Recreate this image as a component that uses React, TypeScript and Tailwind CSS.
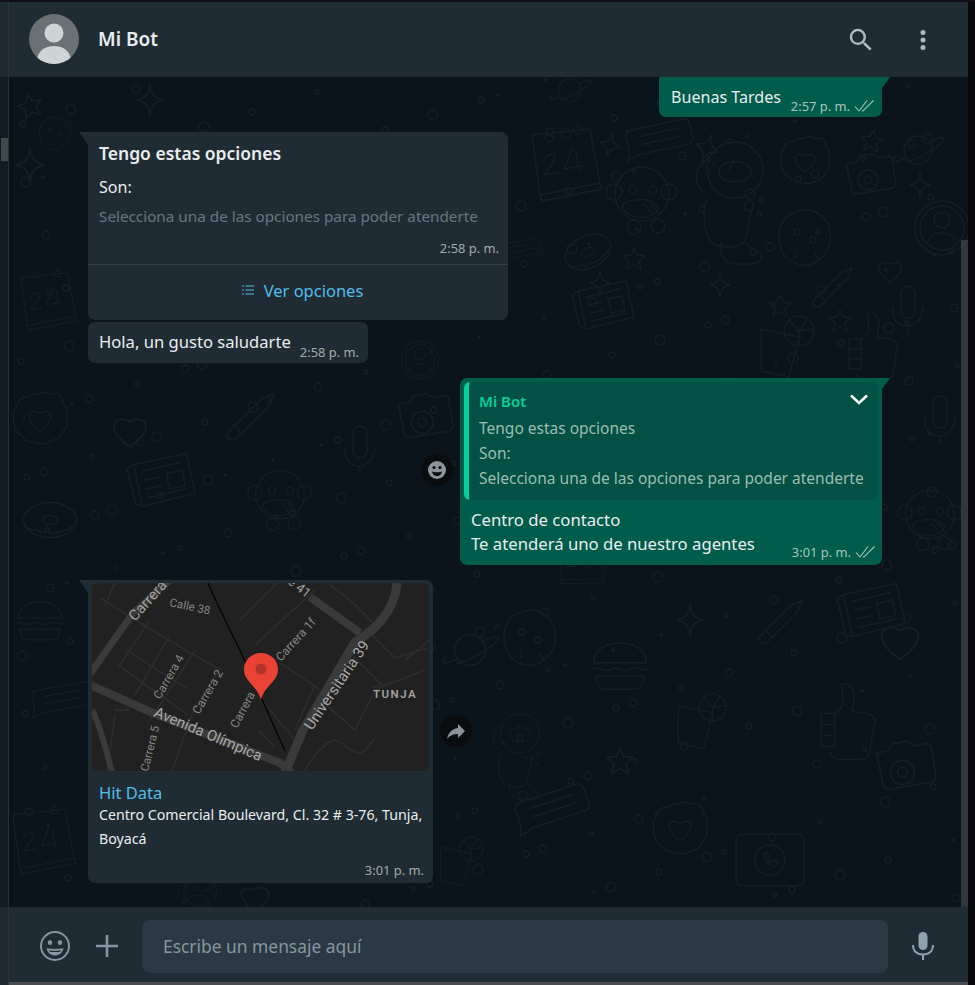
import type { ReactNode } from "react";

const font = "font-['Noto_Sans','Liberation_Sans',sans-serif]";

const Checks = () => (
  <svg width="21" height="14" viewBox="0 0 21 14" fill="none" stroke="#9fc9bd" strokeWidth="1.1" className="shrink-0">
    <path d="M1 7.5l4 4.5L13 1.5" />
    <path d="M8 11.5l.8.6L19.5 1.5" />
  </svg>
);

const Tail = ({ side, color }: { side: "left" | "right"; color: string }) => (
  <svg
    width="10"
    height="14"
    viewBox="0 0 10 14"
    className={side === "left" ? "absolute top-0 left-[-9px]" : "absolute top-0 right-[-8px]"}
  >
    {side === "left" ? <path d="M0 0h10v14z" fill={color} /> : <path d="M10 0H0v14z" fill={color} />}
  </svg>
);

const Star = ({ x, y, s = 1, r = 0 }: { x: number; y: number; s?: number; r?: number }) => (
  <path transform={`translate(${x} ${y}) rotate(${r}) scale(${s})`} d="M0-10l3 7 8 1-6 5 2 8-7-4-7 4 2-8-6-5 8-1z" />
);

const Spark = ({ x, y, s = 1, r = 0 }: { x: number; y: number; s?: number; r?: number }) => (
  <path transform={`translate(${x} ${y}) rotate(${r}) scale(${s})`} d="M0-12C1-4 3-2 10 0 3 2 1 4 0 12-1 4-3 2-10 0-3-2-1-4 0-12z" />
);

const G = ({ x, y, s = 1, r = 0, children }: { x: number; y: number; s?: number; r?: number; children: ReactNode }) => (
  <g transform={`translate(${x} ${y}) rotate(${r}) scale(${s})`}>{children}</g>
);

type P = { x: number; y: number; s?: number; r?: number };

const Calendar = (p: P) => (
  <G {...p}>
    <path d="M-30-28L28-34 38 20-22 32z" />
    <path d="M-22 32l2 6 60-12-2-6" />
    <circle cx="-12" cy="-31" r="4" />
    <circle cx="16" cy="-33" r="4" />
    <path d="M-18-2c2-10 14-8 10 0l-10 14 14-2M10-14L2 6l18-3M14-12l3 20" />
  </G>
);

const Note = (p: P) => (
  <G {...p}>
    <path d="M-30-10L28-20c3 0 4 1 5 4l3 16c0 3-1 4-4 5l-50 9-12 6 2-10-3-14c0-3 1-5 4-6z" />
    <path d="M-18-4L22-11M-16 4L24-3" />
  </G>
);

const Monkey = (p: P) => (
  <G {...p}>
    <circle cx="0" cy="-6" r="27" />
    <circle cx="-28" cy="-8" r="8" />
    <circle cx="27" cy="-8" r="8" />
    <circle cx="-9" cy="-10" r="4" />
    <circle cx="11" cy="-10" r="4" />
    <path d="M-20 6c6-8 30-10 36 2-4 12-30 14-36-2zM2 4l8 10M8 3l8 10" />
    <circle cx="-8" cy="27" r="7" />
    <circle cx="16" cy="26" r="7" />
  </G>
);

const Astronaut = (p: P) => (
  <G {...p}>
    <circle cx="0" cy="-38" r="28" />
    <path d="M-16-36c0-14 32-14 32 0 0 12-32 14-32 0zM-6-38l5-10" />
    <path d="M-28-48c-12 4-14 24-4 32" />
    <path d="M-28-8c-6 14-2 32 4 42 6 6 30 8 34-2l8-36" />
    <path d="M-14 34c-4 14 6 22 16 22s26 2 24-8c-2-8-14-8-16-14" />
    <circle cx="14" cy="-2" r="5" />
    <circle cx="26" cy="-8" r="2" />
    <circle cx="24" cy="6" r="2" />
  </G>
);

const Cookie = (p: P) => (
  <G {...p}>
    <path d="M-24-14c4-12 14-14 24-16 12 0 22 8 24 18 4 12 0 24-10 32-8 8-22 6-30 0-10-8-12-24-8-34z" />
    <circle cx="-8" cy="-8" r="3" />
    <circle cx="8" cy="0" r="3" />
    <path d="M-10 10c2 4 2 6 0 8M10 14l4 6" />
  </G>
);

const Flower = (p: P) => (
  <G {...p}>
    <path d="M0-24c6-4 10 2 14 0 6 0 6 6 8 10 4 4 2 8 2 14 2 6-2 8-4 12-2 6-8 6-12 8-6 4-10 0-16 0-6 0-8-6-12-8-4-4-4-10-4-14-2-6 2-8 4-14 2-6 8-4 12-6 2-2 4-2 8-2z" />
    <path d="M0 10C-16-2-10-12 0-6 10-12 16-2 0 10z" />
  </G>
);

const Camera = (p: P) => (
  <G {...p}>
    <path d="M-20-14l10-2 4-6 12-2 6 4 10-2c3 0 4 1 4 3l4 24c0 3-1 4-3 5l-36 6c-3 0-4-1-5-3l-5-24c0-2 0-3-1-3z" />
    <circle cx="2" cy="2" r="10" />
    <circle cx="2" cy="2" r="4" />
  </G>
);

const Saturn = (p: P) => (
  <G {...p}>
    <circle cx="0" cy="0" r="14" />
    <path d="M-12 8C-24 14-28 12-22 6M12-8C24-14 30-14 22-6 14 2-2 10-12 12" />
  </G>
);

const Profile = (p: P) => (
  <G {...p}>
    <circle r="27" />
    <circle r="22" />
    <circle cy="-8" r="8" />
    <path d="M-14 14c2-12 26-12 28 0" />
  </G>
);

const Donut = (p: P) => (
  <G {...p}>
    <ellipse rx="24" ry="16" />
    <ellipse rx="7" ry="4" />
    <path d="M-22 6c8 6 10 0 14 6 6-4 10 2 14 0 6-4 8 0 14-6" />
  </G>
);

const Paper = (p: P) => (
  <G {...p}>
    <path d="M-24-14L24-24l8 36-48 12z" />
    <path d="M-24-14l-6 4 8 32 6 2" />
    <path d="M-16-8L18-16M-14 0L0-3M-12 8L2 5M-10 16L24 8" />
    <path d="M6-6L20-9l3 14-14 3z" />
  </G>
);

const Pencil = (p: P) => (
  <G {...p}>
    <path d="M-18 10L10-18l10-4-4 10-28 28c-4 2-10-2-6-6z" />
    <path d="M-14 4l8 8" />
  </G>
);

const Mic = (p: P) => (
  <G {...p}>
    <rect x="-7" y="-24" width="14" height="32" rx="7" />
    <path d="M-15-2c-2 24 28 24 30 0M0 16v8" />
  </G>
);

const Thumb = (p: P) => (
  <G {...p}>
    <path d="M-14-6c10-4 8-16 6-26 6-4 12 4 12 10 0 6-2 10-2 14l14 2c6 2 8 6 6 10l-4 26c-2 4-6 6-10 6h-14c-8 0-10-2-12-6" />
    <path d="M-26-6h12v10h-12zM-26 4h12v10h-12zM-26 14h12v10h-12z" />
  </G>
);

const Drink = (p: P) => (
  <G {...p}>
    <path d="M-24-16L14-8 4 32-24 26z" />
    <circle cx="14" cy="-14" r="15" />
    <path d="M14-14L4-25M14-14l14-2M14-14v15M14-14l8-12" />
  </G>
);

const Heart = (p: P) => (
  <G {...p}>
    <path d="M0 12C-18 0-12-12 0-6 12-12 18 0 0 12z" />
  </G>
);

const Burger = (p: P) => (
  <G {...p}>
    <path d="M-24-2c0-24 48-24 48 0zM-26 4c8-4 12 4 18 0s10 4 16 0 12 2 18 0M-22 10h44c0 8-4 12-10 12h-24c-6 0-10-4-10-12z" />
  </G>
);

const Phone = (p: P) => (
  <G {...p}>
    <rect x="-34" y="-26" width="68" height="52" rx="6" />
    <circle r="15" />
    <path d="M-6-5c0 6 6 11 12 11l2-4-4-2-2 2c-2 0-4-2-5-4l2-2-2-4z" />
  </G>
);

const spots = Array.from({ length: 300 }, (_, i) => {
  const a = (i * 7919 + 31) % 953;
  const b = (i * 3571 + 97) % 827;
  return { x: 12 + a, y: 80 + b, r: 2 + (i % 4), fill: i % 5 === 0 };
});

const Doodles = () => (
  <svg
    viewBox="9 77 959 830"
    className="absolute inset-0 w-full h-full"
    fill="none"
    stroke="#151f25"
    strokeWidth="1.4"
    strokeLinejoin="round"
    strokeLinecap="round"
  >
    {spots.map((s, i) =>
      s.fill ? <circle key={i} cx={s.x} cy={s.y} r="1.8" fill="#151f25" stroke="none" /> : <circle key={i} cx={s.x} cy={s.y} r={s.r} />
    )}
    <Calendar x={562} y={163} />
    <Note x={657} y={140} r={-2} />
    <Monkey x={642} y={200} />
    <Astronaut x={735} y={208} />
    <Cookie x={805} y={240} />
    <Flower x={805} y={162} />
    <Camera x={866} y={178} />
    <Saturn x={918} y={150} />
    <Profile x={942} y={228} />
    <Donut x={588} y={252} r={-25} />
    <Paper x={602} y={305} />
    <Pencil x={832} y={290} />
    <Mic x={908} y={310} />
    <Thumb x={875} y={345} />
    <Drink x={785} y={345} />
    <Star x={872} y={140} s={1} r={10} />
    <Star x={634} y={258} s={1} />
    <Star x={780} y={305} s={1} />
    <Star x={840} y={320} s={1} />
    <Spark x={610} y={145} s={1} r={15} />
    <Spark x={707} y={148} s={1.2} r={20} />
    <Spark x={708} y={165} s={0.8} />
    <Spark x={600} y={283} s={1} />
    <Spark x={720} y={285} s={1} />
    <Spark x={920} y={185} s={1} />
    <Heart x={890} y={270} />
    <Heart x={130} y={430} s={1.4} />
    <Heart x={900} y={640} s={1.6} />
    <Star x={30} y={105} s={1.1} r={-15} />
    <Spark x={150} y={100} s={1.3} />
    <Spark x={30} y={165} s={1.4} />
    <Cookie x={55} y={135} s={0.6} />
    <Saturn x={570} y={90} s={0.8} />
    <Profile x={420} y={360} s={0.7} />
    <Camera x={420} y={420} s={1.1} />
    <Calendar x={45} y={300} s={0.8} />
    <Flower x={40} y={420} s={1.1} />
    <Pencil x={250} y={420} s={1.2} />
    <Monkey x={280} y={500} s={0.9} />
    <Paper x={160} y={480} s={1.1} />
    <Mic x={360} y={450} />
    <Donut x={50} y={520} s={1.1} />
    <Burger x={620} y={665} s={1.1} />
    <Cookie x={530} y={640} />
    <Drink x={700} y={720} s={0.9} />
    <Phone x={770} y={860} />
    <Note x={550} y={810} s={1.1} r={-8} />
    <Flower x={680} y={830} s={1.1} />
    <Thumb x={850} y={720} s={1.1} />
    <Camera x={900} y={770} s={1.2} />
    <Astronaut x={520} y={760} s={0.7} />
    <Paper x={870} y={610} s={1.1} />
    <Monkey x={930} y={520} s={0.9} />
    <Pencil x={780} y={625} s={1.1} />
    <Star x={620} y={760} s={1.2} />
    <Spark x={690} y={620} s={1.3} />
    <Saturn x={470} y={650} s={1.1} />
    <Burger x={40} y={620} s={0.9} />
    <Note x={60} y={700} s={0.9} />
    <Calendar x={40} y={840} s={0.9} />
    <Monkey x={200} y={895} s={0.6} />
    <Heart x={255} y={897} s={1.2} />
    <Drink x={460} y={860} s={0.8} />
    <Mic x={940} y={420} s={1} />
    <Spark x={480} y={180} s={1} />
    <Profile x={570} y={460} s={0.9} />
    <Calendar x={580} y={560} s={0.7} r={10} />
    <Donut x={700} y={420} s={1} />
    <Note x={520} y={250} s={0.6} />
  </svg>
);

const MapThumb = () => (
  <svg viewBox="2 3 337 188" className="block w-full h-[188px] rounded-[6px] bg-[#212121]">
    <g fill="none" stroke="#2c2c2c" strokeWidth="1.8">
      <path d="M10 18L70 55 130 90M25 3L15 25M60 40l-30 45M80 55L45 115M105 70L60 140M130 88l-28 46-20 58M36 70l60 38M28 85l70 50M150 40L190 0M165 65L225 10M190 83l45 30M225 115l40 35 20-40 50-20M282 108l28-8M262 75l30 30M275 48l30 30 32-10M240 5l20 15 25 25M205 150l20-45M215 190c8-14 22-30 30-30s20 20 30 10l10-12M25 135l-8 56M40 130h-16M340 60l-25 20M168 150l16 16M180 130l25 30" />
    </g>
    <g fill="none" stroke="#3a3a3a" strokeLinejoin="round">
      <path d="M0 94L43 33 80 0" strokeWidth="7" />
      <path d="M0 105L63 133 190 183l12 10" strokeWidth="8" />
      <path d="M195 193l18-43 52-88c18-10 40-30 42-59" strokeWidth="9" />
      <path d="M220 17l50 36" strokeWidth="8" />
      <path d="M2 130c8 14 14 40 20 62" strokeWidth="6" />
    </g>
    <path d="M118 3c10 24 25 52 36 76l41 92" fill="none" stroke="#000" strokeWidth="1.2" />
    <g fill="#858585" fontFamily="Roboto, sans-serif">
      <text transform="translate(45 42) rotate(-48)" fontSize="15" fill="#a0a0a0">Carrera</text>
      <text transform="translate(79 26) rotate(12)" fontSize="11.5">Calle 38</text>
      <text transform="translate(70 120) rotate(-60)" fontSize="12">Carrera 4</text>
      <text transform="translate(109 135) rotate(-60)" fontSize="12">Carrera 2</text>
      <text transform="translate(147 149) rotate(-62)" fontSize="12">Carrera</text>
      <text transform="translate(191 82) rotate(-48)" fontSize="12">Carrera 1f</text>
      <text transform="translate(58 192) rotate(-76)" fontSize="11.5">Carrera 5</text>
      <text transform="translate(197 3) rotate(38)" fontSize="13" fill="#a0a0a0">e 41</text>
      <text transform="translate(63 136) rotate(23)" fontSize="15" fill="#a8a8a8">Avenida Olímpica</text>
      <text transform="translate(222 151) rotate(-56)" fontSize="15" fill="#a8a8a8">Universitaria 39</text>
      <text x="283" y="118" fontSize="11.5" fontWeight="600" letterSpacing="1.5" fill="#a0a0a0">TUNJA</text>
    </g>
    <path d="M171 73c-9.500 0-17 7-17 16.500 0 12.500 14 16.500 17 30.500 3-14 17-18 17-30.500C188 80 180.500 73 171 73z" fill="#ea4335" />
    <circle cx="171" cy="89" r="5.5" fill="#b3352a" />
  </svg>
);

const Icons = {
  search: (
    <svg width="30" height="30" viewBox="0 0 24 24" fill="#aebac1">
      <path d="M15.5 14h-.79l-.28-.27A6.47 6.47 0 0 0 16 9.5 6.5 6.5 0 1 0 9.5 16c1.61 0 3.09-.59 4.23-1.57l.27.28v.79l5 4.99L20.49 19l-4.99-5zm-6 0C7.01 14 5 11.99 5 9.500S7.010 5 9.500 5 14 7.010 14 9.500 11.990 14 9.500 14z" />
    </svg>
  ),
  dots: (
    <svg width="8" height="22" viewBox="0 0 8 22" fill="#aebac1">
      <circle cx="4" cy="3.5" r="2.5" />
      <circle cx="4" cy="11" r="2.5" />
      <circle cx="4" cy="18.5" r="2.5" />
    </svg>
  ),
  smile: (
    <svg width="32" height="32" viewBox="0 0 32 32">
      <circle cx="16" cy="16" r="14" fill="none" stroke="#8696a0" strokeWidth="2" />
      <ellipse cx="11" cy="12.5" rx="2.2" ry="2.6" fill="#8696a0" />
      <ellipse cx="21" cy="12.5" rx="2.2" ry="2.6" fill="#8696a0" />
      <path d="M7.5 18c3 1.200 14 1.200 17 0-.6 4.500-4 7.500-8.500 7.500S8.100 22.500 7.500 18z" fill="#8696a0" />
      <path d="M10 20.200c3 .7 9 .7 12 0-.5 1-1 1.500-1.500 1.800h-9c-.5-.3-1-.8-1.500-1.800z" fill="#202c33" />
    </svg>
  ),
  plus: (
    <svg width="22" height="22" viewBox="0 0 22 22" stroke="#8696a0" strokeWidth="2.6">
      <path d="M11 0v22M0 11h22" />
    </svg>
  ),
  mic: (
    <svg width="22" height="28" viewBox="0 0 22 28" fill="#8fa3ae">
      <rect x="6.500" y="0" width="9" height="18" rx="4.500" />
      <path d="M1 13c0 6 4 9.500 10 9.500S21 19 21 13" fill="none" stroke="#8fa3ae" strokeWidth="2" />
      <rect x="10" y="22" width="2" height="6" />
    </svg>
  ),
};

const App = () => {
  return (
    <div className={`${font} w-[975px] h-[985px] bg-[#08070c] flex flex-col overflow-hidden`}>
      <div className="h-[2px] shrink-0 bg-[#110f1a]" />
      <div className="flex flex-1 min-h-0">
        {/* thin left column from the window behind */}
        <div className="w-[9px] shrink-0 flex flex-col border-r border-[#2a3337]">
          <div className="h-[75px] bg-[#1e2a30]" />
          <div className="flex-1 bg-[#111b21] pt-[61px] pl-px">
            <div className="h-[23px] w-[7px] bg-[#3f484d]" />
          </div>
          <div className="h-[78px] bg-[#1e2a30]" />
        </div>

        <div className="w-[959px] shrink-0 flex flex-col">
          <header className="h-[75px] shrink-0 bg-[#202c33] flex items-center pl-[20px] pr-[41px]">
            <div className="w-[50px] h-[50px] rounded-full bg-[#6a7175] overflow-hidden relative -mt-[1px]">
              <svg viewBox="0 0 50 50" className="w-full h-full">
                <circle cx="25" cy="19" r="9.5" fill="#cfd4d6" />
                <path d="M8 46c1-10 9-14 17-14s16 4 17 14c-4 3-10 5-17 5S12 49 8 46z" fill="#cfd4d6" />
              </svg>
            </div>
            <span className="ml-[19px] text-[19px] font-semibold text-[#e9edef]">Mi Bot</span>
            <div className="ml-auto flex items-center gap-[43px]">
              {Icons.search}
              {Icons.dots}
            </div>
          </header>

          <main className="h-[830px] shrink-0 relative bg-[#0b141a] overflow-hidden">
            <Doodles />
            <div className="absolute top-[163px] right-0 bottom-0 w-[7px] bg-[#ffffff26]" />
            <div className="relative flex flex-col pl-[79px] pr-[86px]">
              <div className="self-end relative w-[223px] h-[40px] bg-[#005c4b] rounded-[7px] rounded-tr-none rounded-tl-none flex items-end pl-[12px] pr-[7px] pb-[3px]">
                <Tail side="right" color="#005c4b" />
                <span className="text-[16.1px] leading-[21px] mb-[6px] text-[#e9edef]">Buenas Tardes</span>
                <div className="ml-auto flex items-center gap-[4px] text-[12.9px] leading-[16px] text-[#a3c7bd]">
                  2:57 p. m. <Checks />
                </div>
              </div>

              <div className="mt-[15px] relative w-[420px] h-[188px] bg-[#202c33] rounded-[7px] rounded-tl-none flex flex-col">
                <Tail side="left" color="#202c33" />
                <div className="pl-[11px] pr-[9px] pt-[8px] flex-1 flex flex-col">
                  <div className="text-[17.5px] leading-[26px] font-semibold text-[#e9edef]">Tengo estas opciones</div>
                  <div className="text-[16.1px] leading-[24px] mt-[9px] text-[#e9edef]">Son:</div>
                  <div className="text-[15.27px] leading-[20px] mt-[7px] text-[#667781]">
                    Selecciona una de las opciones para poder atenderte
                  </div>
                  <div className="text-[12.9px] leading-[16px] mt-[14px] text-right text-[#a1a9ad]">2:58 p. m.</div>
                </div>
                <div className="h-[56px] pb-[4px] pl-[9px] border-t border-[#37434a] flex items-center justify-center gap-[10px] text-[#53bdeb]">
                  <svg width="12" height="12" viewBox="0 0 12 12" fill="none" stroke="#53bdeb" strokeWidth="1.2" className="mb-[2px]">
                    <path d="M3.5 2H12M3.5 6H12M3.5 10H12M0 2h1.8M0 6h1.8M0 10h1.8" />
                  </svg>
                  <span className="text-[16.5px] leading-[24px]">Ver opciones</span>
                </div>
              </div>

              <div className="mt-[2px] w-[280px] h-[41px] bg-[#202c33] rounded-[7px] flex items-end pl-[11px] pr-[9px] pb-[3px]">
                <span className="text-[16.6px] leading-[24px] mb-[6px] text-[#e9edef]">Hola, un gusto saludarte</span>
                <span className="ml-auto text-[12.9px] leading-[16px] text-[#a1a9ad]">2:58 p. m.</span>
              </div>

              <div className="mt-[15px] self-end relative w-[422px] h-[187px] bg-[#005c4b] rounded-[7px] rounded-tr-none p-[4px] flex flex-col">
                <Tail side="right" color="#005c4b" />
                <div className="absolute left-[-39px] top-[76px] w-[32px] h-[32px] rounded-full bg-[#090d10] flex items-center justify-center">
                  <svg width="18" height="18" viewBox="0 0 18 18">
                    <circle cx="9" cy="9" r="9" fill="#8b9498" />
                    <circle cx="6" cy="6.5" r="1.6" fill="#090d10" />
                    <circle cx="12" cy="6.5" r="1.6" fill="#090d10" />
                    <path d="M4 10.5c2 1 8 1 10 0-.5 3-2.500 4.500-5 4.500s-4.500-1.500-5-4.500z" fill="#090d10" />
                  </svg>
                </div>
                <div className="h-[118px] bg-[#025144] rounded-[6px] border-l-[5px] border-[#06cf9c] pl-[10px] pr-[8px] pt-[8px] relative">
                  <div className="text-[15px] leading-[22px] font-semibold text-[#06cf9c]">Mi Bot</div>
                  <div className="text-[15.5px] leading-[25px] mt-[4px] text-[#9dbcb3]">
                    <div>Tengo estas opciones</div>
                    <div>Son:</div>
                    <div className="whitespace-nowrap">Selecciona una de las opciones para poder atenderte</div>
                  </div>
                  <svg width="18" height="11" viewBox="0 0 18 11" fill="none" stroke="#fff" strokeWidth="2.5" className="absolute right-[10px] top-[12px]">
                    <path d="M1 1.5l8 7.500 8-7.500" />
                  </svg>
                </div>
                <div className="flex items-end pl-[7px] pr-[2px] pt-[8px]">
                  <div className="text-[16.7px] leading-[24px] text-[#e9edef]">
                    <div>Centro de contacto</div>
                    <div>Te atenderá uno de nuestro agentes</div>
                  </div>
                  <div className="ml-auto flex items-center gap-[4px] text-[12.9px] leading-[16px] text-[#a3c7bd] mb-[-4px]">
                    3:01 p. m. <Checks />
                  </div>
                </div>
              </div>

              <div className="mt-[15px] relative w-[345px] h-[303px] bg-[#202c33] rounded-[7px] rounded-tl-none pt-[3px] px-[4px] flex flex-col">
                <Tail side="left" color="#202c33" />
                <div className="absolute right-[-39px] top-[135px] w-[32px] h-[32px] rounded-full bg-[#090d10] flex items-center justify-center">
                  <svg width="24" height="24" viewBox="0 0 24 24" fill="#8b9498">
                    <path d="M14 9V5l7 7-7 7v-4.100c-5 0-8.500 1.600-11 5.100 1-5 4-10 11-11z" />
                  </svg>
                </div>
                <MapThumb />
                <div className="pl-[7px] pr-[5px] pt-[10px] flex flex-col flex-1">
                  <div className="text-[16.5px] leading-[24px] text-[#53bdeb]">Hit Data</div>
                  <div className="text-[14.2px] leading-[24px] text-[#e9edef] -mt-[2px]">
                    Centro Comercial Boulevard, Cl. 32 # 3-76, Tunja, Boyacá
                  </div>
                  <div className="text-[12.9px] leading-[16px] text-right text-[#a1a9ad] mt-[11px]">3:01 p. m.</div>
                </div>
              </div>
            </div>
          </main>

          <footer className="flex-1 bg-[#202c33] flex items-center pt-[2px] pl-[30px] pr-[34px]">
            <div className="w-[32px] flex justify-center">{Icons.smile}</div>
            <div className="w-[22px] ml-[25px] flex justify-center">{Icons.plus}</div>
            <div className="ml-[24px] mt-[2px] w-[746px] h-[53px] rounded-[8px] bg-[#2a3942] flex items-center pl-[21px] text-[17.4px] text-[#8696a0]">
              Escribe un mensaje aquí
            </div>
            <div className="ml-auto">{Icons.mic}</div>
          </footer>
          <div className="h-[3px] shrink-0 bg-[#4a4c4d]" />
        </div>
      </div>
    </div>
  );
};

export default App;
